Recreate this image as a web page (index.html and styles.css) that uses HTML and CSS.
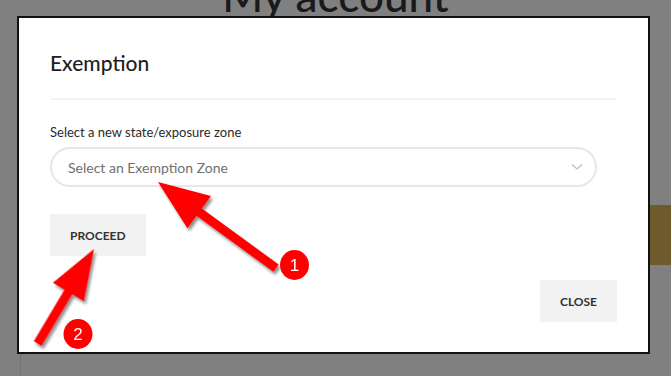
FILE: index.html
```html
<!DOCTYPE html>
<html>
<head>
<meta charset="utf-8">
<title>My account</title>
<link rel="stylesheet" href="styles.css">
</head>
<body>
    <!-- page behind the overlay -->
    <div class="page">
        <h1 class="pageTitle">My account</h1>
        <div class="pageBody">
            <div class="goldBar"></div>
        </div>
    </div>

    <!-- exemption dialog -->
    <div class="modal">
        <div class="modalHead">
            <h4>Exemption</h4>
        </div>
        <div class="modalBody">
            <label class="fieldLabel">Select a new state/exposure zone</label>
            <div class="zoneSelect">
                <span>Select an Exemption Zone</span>
                <svg class="chevron" width="12" height="8" viewBox="0 0 12 8"><path d="M1 1.5 L6 6 L11 1.5" fill="none" stroke="#bdbdbd" stroke-width="1.3"/></svg>
            </div>
            <div class="btnRow">
                <button class="btn">Proceed</button>
            </div>
        </div>
        <div class="modalFoot">
            <button class="btn">Close</button>
        </div>
    </div>

    <!-- annotation arrows -->
    <svg class="marks" width="671" height="376" viewBox="0 0 671 376">
        <defs>
            <filter id="shade" x="-20%" y="-20%" width="160%" height="160%">
                <feDropShadow dx="2" dy="3" stdDeviation="1.6" flood-color="#000" flood-opacity="0.45"/>
            </filter>
        </defs>
        <g filter="url(#shade)" fill="#ff0000">
            <polygon transform="translate(158 182) rotate(36.1)" points="0,0 51,-20 51,-4.5 146,-4.5 146,4.5 51,4.5 51,20"/>
            <polygon transform="translate(94 249) rotate(120.8)" points="0,0 50,-18 50,-4.5 110,-4.5 110,4.5 50,4.5 50,18"/>
        </g>
        <ellipse cx="294.5" cy="265" rx="14.5" ry="15" fill="#ff0000"/>
        <text x="294.5" y="271" class="num">1</text>
        <ellipse cx="78" cy="334" rx="14.5" ry="15" fill="#ff0000"/>
        <text x="78" y="340" class="num">2</text>
    </svg>
</body>
</html>
```
FILE: styles.css
```css
html,body,h1,h4{
   margin: 0;
   padding: 0;
}
body{
   width: 671px;
   height: 376px;
   overflow: hidden;
   background: #808080;
   font-family: Lato, "Open Sans", sans-serif;
   position: relative;
}
/* page behind */
.page{
   height: 376px;
   overflow: hidden;
}
.pageTitle{
   margin-top: -27px;
   font-size: 44px;
   line-height: 44px;
   font-weight: 500;
   color: #1a1a1a;
   text-align: center;
}
.pageBody{
   margin-left: 20px;
   height: 359px;
   box-sizing: border-box;
   border-left: 1px solid #747474;
   padding-top: 188px;
}
.goldBar{
   width: 120px;
   height: 60px;
   margin-left: auto;
   background: #6f5a2d;
}
/* dialog */
.modal{
   position: absolute;
   top: 16px;
   left: 17px;
   width: 633px;
   height: 338px;
   box-sizing: border-box;
   border: 2px solid #111;
   background: white;
   padding: 32px 31px 30px;
   display: flex;
   flex-direction: column;
}
.modalHead{
   padding-bottom: 22px;
   border-bottom: 2px solid #f4f4f4;
}
.modalHead h4{
   font-size: 21px;
   line-height: 26px;
   font-weight: 500;
   color: #1e1e1e;
}
.modalBody{
   padding-top: 24px;
   display: flex;
   flex-direction: column;
   align-items: flex-start;
}
.fieldLabel{
   font-size: 13px;
   line-height: 16px;
   color: #2a2a2a;
   margin-bottom: 7px;
}
.zoneSelect{
   width: 547px;
   height: 40px;
   box-sizing: border-box;
   border: 2px solid #e7e7e7;
   border-radius: 20px;
   display: flex;
   align-items: center;
   justify-content: space-between;
   padding: 0 12px 0 16px;
   font-size: 14px;
   color: #6f6f6f;
}
.chevron{
   display: block;
}
.btnRow{
   margin-top: 27px;
}
.btn{
   height: 42px;
   padding: 0 20px;
   border: none;
   background: #f2f2f2;
   font-family: Lato, "Open Sans", sans-serif;
   font-size: 12px;
   font-weight: 700;
   text-transform: uppercase;
   color: #333;
}
.modalFoot{
   margin-top: auto;
   display: flex;
   justify-content: flex-end;
}
/* annotations */
.marks{
   position: absolute;
   top: 0;
   left: 0;
   pointer-events: none;
}
.num{
   font-family: "Liberation Sans", Arial, sans-serif;
   font-size: 17px;
   fill: white;
   text-anchor: middle;
}
```
